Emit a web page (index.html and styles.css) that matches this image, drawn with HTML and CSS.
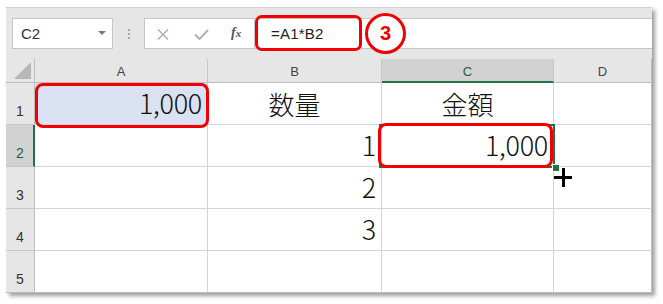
FILE: index.html
```html
<!DOCTYPE html>
<html lang="ja">
<head>
<meta charset="utf-8">
<link rel="stylesheet" href="styles.css">
</head>
<body>
<div class="frame">
  <div class="toolbar">
    <div class="namebox">
      <span class="name">C2</span>
      <span class="dd"></span>
    </div>
    <div class="grip">
      <svg width="3" height="10" viewBox="0 0 3 10"><rect x="0" y="0" width="2" height="2" fill="#a8a8a8"/><rect x="0" y="4" width="2" height="2" fill="#a8a8a8"/><rect x="0" y="8" width="2" height="2" fill="#a8a8a8"/></svg>
    </div>
    <div class="fxbox">
      <svg class="ic-x" width="12" height="11" viewBox="0 0 12 11"><path d="M1 0.5 L11 10.5 M11 0.5 L1 10.5" stroke="#b3b3b3" stroke-width="1.6" fill="none"/></svg>
      <svg class="ic-ok" width="15" height="11" viewBox="0 0 15 11"><path d="M1 5.5 L5.5 10 L14 1" stroke="#b3b3b3" stroke-width="2" fill="none"/></svg>
      <span class="fx">f<span class="fxx">x</span></span>
    </div>
    <div class="formula"><span class="ftext">=A1*B2</span></div>
  </div>
  <div class="sheet">
    <div class="grid">
      <div class="corner"><span class="tri"></span></div>
      <div class="ch">A</div>
      <div class="ch">B</div>
      <div class="ch sel">C</div>
      <div class="ch last">D</div>

      <div class="rh">1</div>
      <div class="c hl num">1,000</div>
      <div class="c center">数量</div>
      <div class="c center">金額</div>
      <div class="c last"></div>

      <div class="rh sel">2</div>
      <div class="c"></div>
      <div class="c num">1</div>
      <div class="c num">1,000</div>
      <div class="c last"></div>

      <div class="rh">3</div>
      <div class="c"></div>
      <div class="c num">2</div>
      <div class="c"></div>
      <div class="c last"></div>

      <div class="rh">4</div>
      <div class="c"></div>
      <div class="c num">3</div>
      <div class="c"></div>
      <div class="c last"></div>

      <div class="rh end">5</div>
      <div class="c end"></div>
      <div class="c end"></div>
      <div class="c end"></div>
      <div class="c last end"></div>
    </div>
    <div class="selbox"></div>
    <div class="handle"></div>
    <div class="mark mark-a1"></div>
    <div class="mark mark-c2"></div>
    <div class="cursor"></div>
  </div>
  <div class="mark mark-f"></div>
  <div class="badge">3</div>
</div>
</body>
</html>
```
FILE: styles.css
```css
* { box-sizing: border-box; }
html, body { margin: 0; padding: 0; background: #fff; }
body {
  width: 663px; height: 304px; overflow: hidden;
  font-family: "Liberation Sans", "Noto Sans CJK JP", sans-serif;
}
.frame {
  position: relative;
  margin: 7px 0 0 6px;
  width: 646px;
  height: 286px;
  background: #e6e6e6;
  border-top: 1px solid #d2d2d2;
  box-shadow: 3px 3px 4px rgba(0,0,0,0.38);
}
.toolbar {
  height: 51px;
  display: flex;
  align-items: flex-start;
  padding-top: 10px;
  padding-left: 6px;
}
.namebox {
  width: 101px; height: 31px;
  background: #fff;
  border: 1px solid #c6c6c6;
  display: flex; align-items: center;
  padding-left: 8px; padding-right: 6px;
  justify-content: space-between;
}
.name { font-size: 15px; color: #333; }
.dd {
  width: 0; height: 0;
  border-left: 4px solid transparent;
  border-right: 4px solid transparent;
  border-top: 4px solid #7a7a7a;
  margin-top: -2px;
}
.grip {
  width: 31px; height: 31px;
  display: flex; align-items: center; justify-content: flex-start;
  padding-left: 15px;
}
.fxbox {
  width: 110px; height: 31px;
  background: #fff;
  border: 1px solid #c6c6c6;
  border-right: none;
  display: flex; align-items: center;
  position: relative;
}
.ic-x { position: absolute; left: 12px; top: 10px; }
.ic-ok { position: absolute; left: 49px; top: 10px; }
.fx {
  position: absolute; left: 86px; top: 6px;
  font-family: "Liberation Serif", serif;
  font-style: italic; font-weight: bold;
  font-size: 14px; color: #555;
}
.fxx { font-size: 11px; }
.formula {
  flex: 1; height: 31px;
  background: #fff;
  border-top: 1px solid #c6c6c6;
  border-bottom: 1px solid #c6c6c6;
  border-left: 1px solid #c6c6c6;
  display: flex; align-items: center;
  padding-left: 16px;
}
.ftext { font-size: 15px; color: #222; letter-spacing: 0.2px; }

.sheet { position: relative; background: #fff; height: 234px; }
.grid {
  display: grid;
  grid-template-columns: 29px 173px 174px 172px 98px;
  grid-template-rows: 24px repeat(5, 42px);
}
.corner {
  background: #e6e6e6;
  border-right: 1px solid #c0c0c0;
  border-bottom: 1px solid #bdbdbd;
  position: relative;
}
.tri {
  position: absolute; right: 3px; bottom: 3px;
  width: 0; height: 0;
  border-left: 17px solid transparent;
  border-bottom: 17px solid #b8b8b8;
}
.ch {
  background: #e6e6e6;
  border-right: 1px solid #c8c8c8;
  border-bottom: 1px solid #bdbdbd;
  display: flex; align-items: center; justify-content: center;
  font-size: 13px; color: #444;
  padding-top: 1px;
}
.ch.sel {
  background: #d2d2d2;
  border-bottom: 2px solid #217346;
  color: #1f5c3a;
  padding-top: 2px;
}
.ch.last { border-right: 1px solid #bdbdbd; }
.rh {
  background: #e6e6e6;
  border-right: 1px solid #bdbdbd;
  border-bottom: 1px solid #c8c8c8;
  display: flex; align-items: flex-end; justify-content: center;
  font-size: 14px; color: #333;
  padding-bottom: 5px;
}
.rh.sel {
  background: #d2d2d2;
  border-right: 2px solid #217346;
  color: #1f5c3a;
  padding-left: 1px;
}
.c {
  border-right: 1px solid #d4d4d4;
  border-bottom: 1px solid #d4d4d4;
  display: flex; align-items: flex-end;
  font-family: "Noto Sans CJK JP", sans-serif;
  font-weight: 300;
  font-size: 27px; line-height: 1;
  color: #111;
  padding: 0 5px 8px 5px;
}
.c.last { border-right: 1px solid #bdbdbd; }
.c.end, .rh.end { border-bottom: 1px solid #bdbdbd; }
.num { justify-content: flex-end; letter-spacing: -0.3px; }
.center { justify-content: center; font-size: 26px; padding-bottom: 7px; }
.hl { background: #d9e1f2; }

.selbox {
  position: absolute;
  left: 373px; top: 65px;
  width: 176px; height: 44px;
  border: 2px solid #217346;
}
.handle {
  position: absolute;
  left: 546px; top: 105px;
  width: 6px; height: 6px;
  background: #217346;
  border: 1px solid #fff;
  box-sizing: content-box;
}
.mark {
  position: absolute;
  border: 3px solid #f00000;
  border-radius: 8px;
}
.mark-a1 { left: 29px; top: 24px; width: 174px; height: 45px; }
.mark-c2 { left: 372px; top: 64px; width: 175px; height: 45px; }
.mark-f { left: 249px; top: 7px; width: 107px; height: 36px; border-radius: 7px; }
.cursor {
  position: absolute;
  left: 548px; top: 109px;
  width: 18px; height: 19px;
  background:
    linear-gradient(#000, #000) center / 3px 100% no-repeat,
    linear-gradient(#000, #000) center / 100% 3px no-repeat;
}
.badge {
  position: absolute;
  left: 359px; top: 5px;
  width: 41px; height: 41px;
  border: 3px solid #f00000;
  border-radius: 50%;
  background: #fff;
  display: flex; align-items: center; justify-content: center;
  font-family: "Liberation Sans", sans-serif;
  font-weight: bold; font-size: 20px; color: #f00000;
}
```
